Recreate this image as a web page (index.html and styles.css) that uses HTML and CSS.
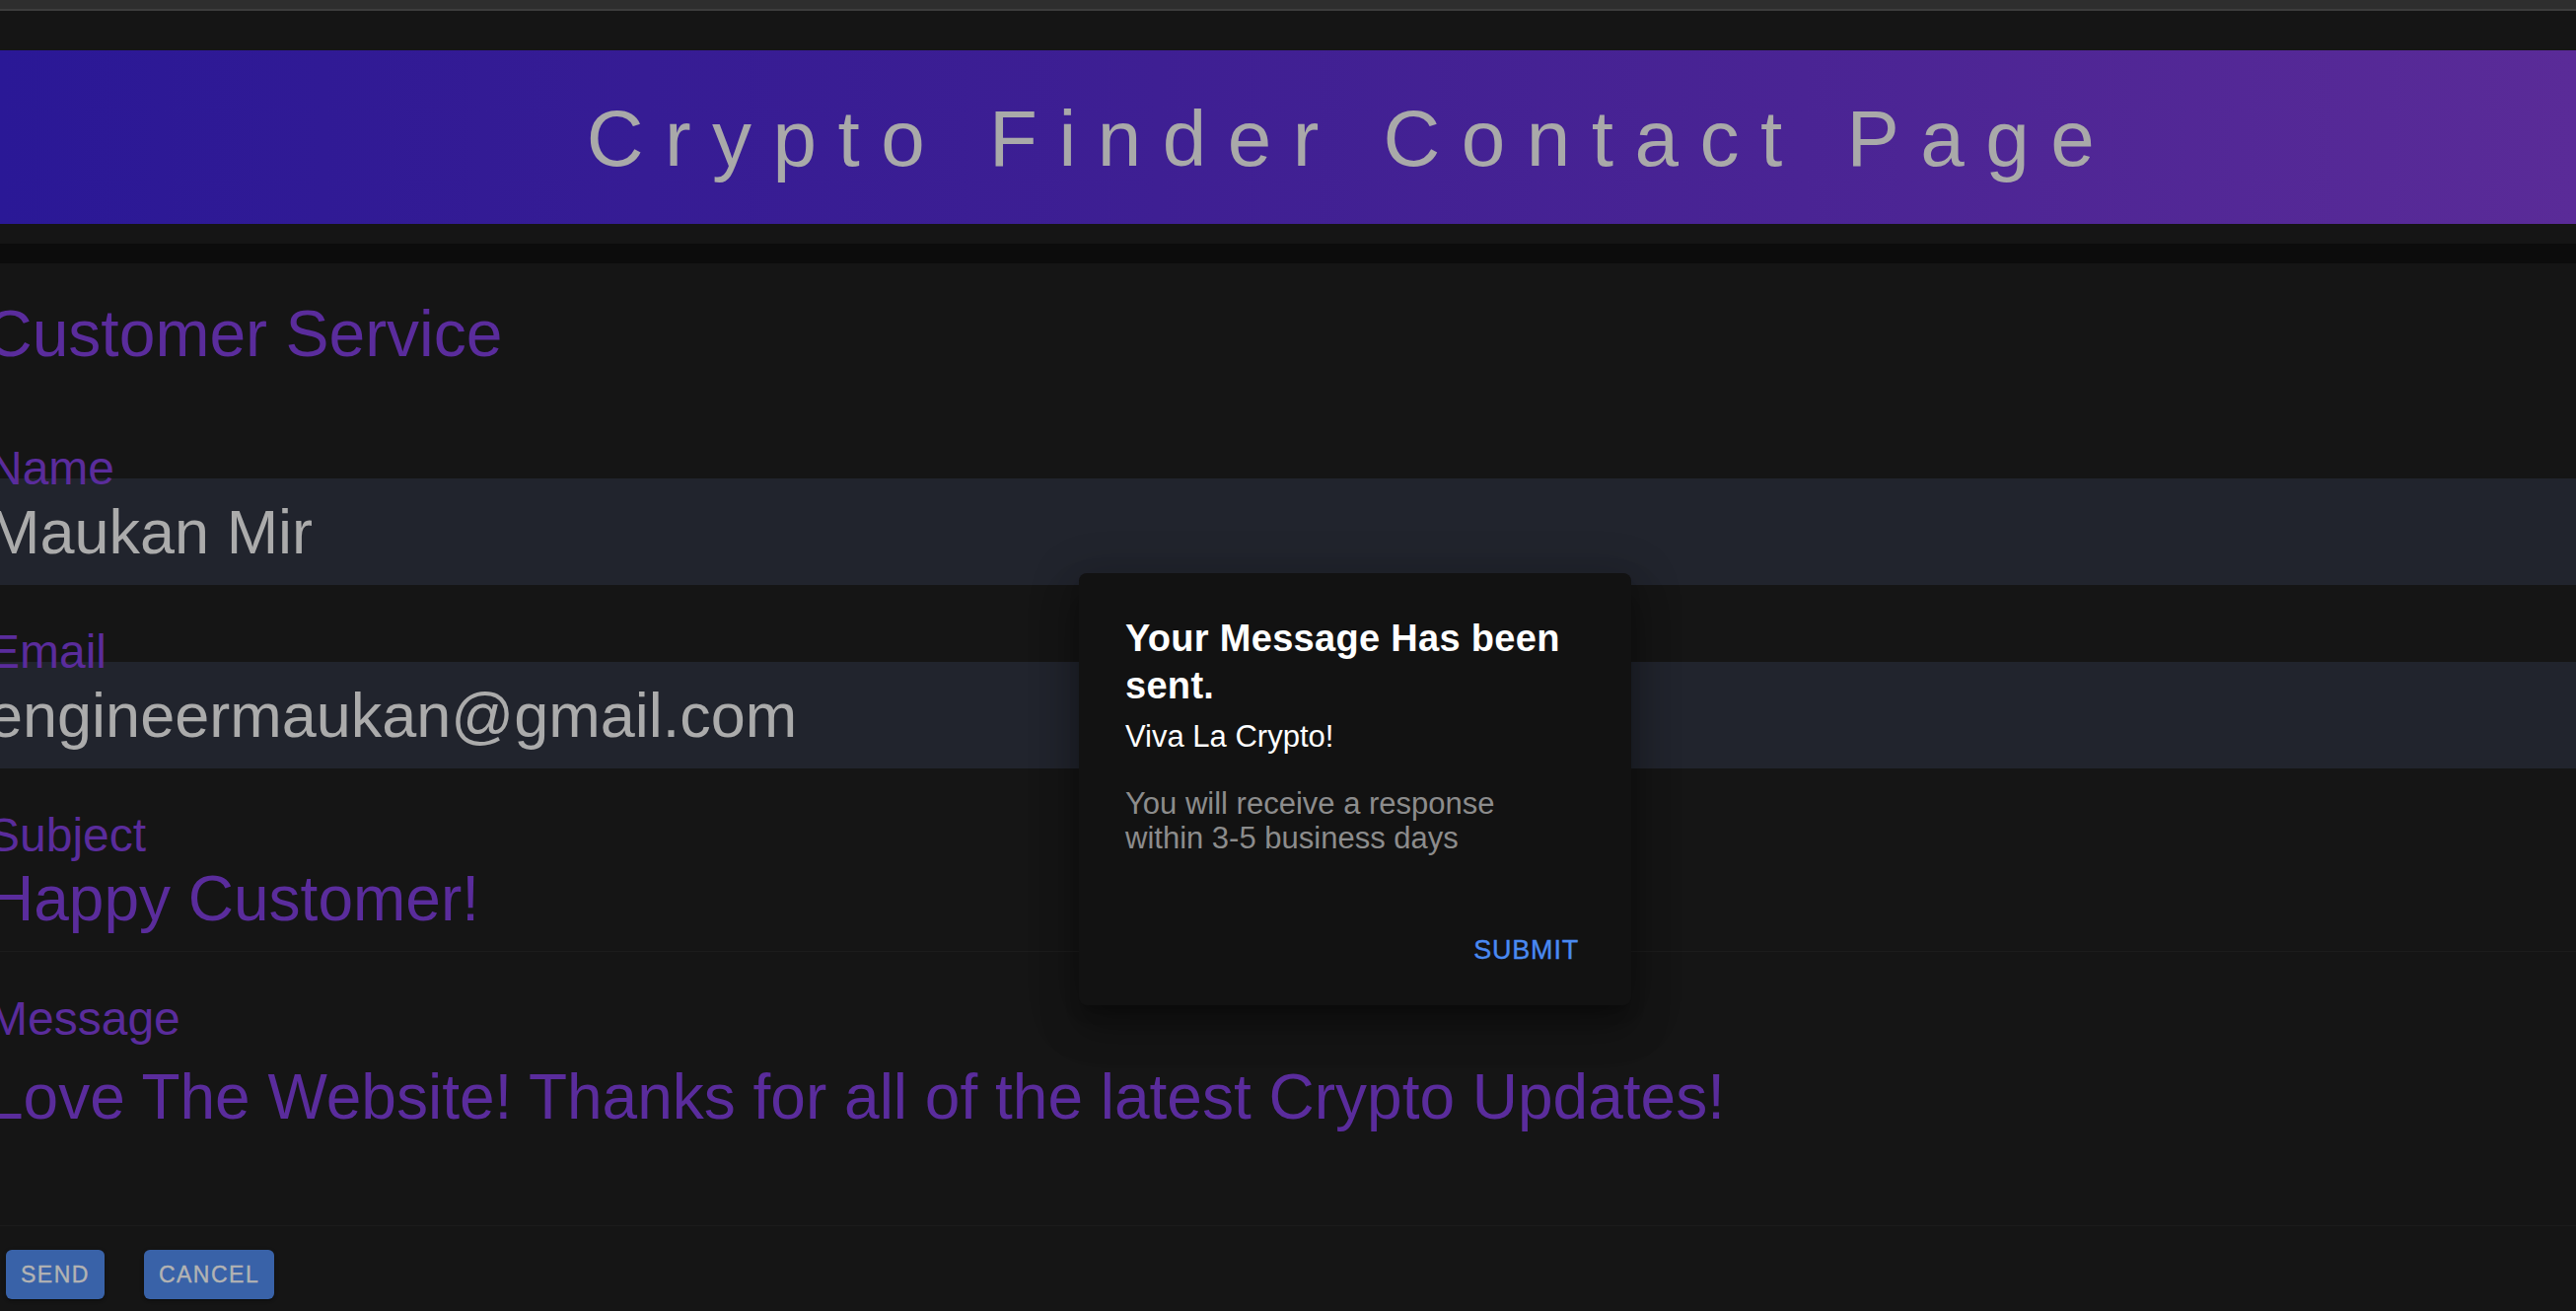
FILE: index.html
```html
<!DOCTYPE html>
<html lang="en">
<head>
<meta charset="utf-8">
<title>Crypto Finder Contact Page</title>
<link rel="stylesheet" href="styles.css">
</head>
<body>
<div class="topbar"></div>
<div class="page">
  <header class="hero">
    <h1 class="hero-title">Crypto Finder Contact Page</h1>
  </header>
  <div class="divider"></div>
  <main class="contact">
    <h2 class="contact-title">Customer Service</h2>
    <form class="form">
      <div class="field filled">
        <label class="field-label">Name</label>
        <div class="field-value">Maukan Mir</div>
      </div>
      <div class="field filled">
        <label class="field-label">Email</label>
        <div class="field-value">engineermaukan@gmail.com</div>
      </div>
      <div class="field plain">
        <label class="field-label">Subject</label>
        <div class="field-value">Happy Customer!</div>
      </div>
      <div class="field plain message">
        <label class="field-label">Message</label>
        <div class="field-value">Love The Website! Thanks for all of the latest Crypto Updates!</div>
      </div>
      <div class="actions">
        <button type="button" class="btn">Send</button>
        <button type="button" class="btn">Cancel</button>
      </div>
    </form>
  </main>
</div>
<div class="dialog" role="dialog">
  <h3 class="dialog-title">Your Message Has been sent.</h3>
  <p class="dialog-sub">Viva La Crypto!</p>
  <p class="dialog-text">You will receive a response within 3-5 business days</p>
  <div class="dialog-actions">
    <button type="button" class="text-btn">Submit</button>
  </div>
</div>
</body>
</html>
```

FILE: styles.css
```css
* { box-sizing: border-box; }

html, body {
  margin: 0;
  padding: 0;
  height: 100%;
}

body {
  background: #151515;
  font-family: "Liberation Sans", Arial, Helvetica, sans-serif;
  overflow: hidden;
  position: relative;
}

.topbar {
  height: 11px;
  background: #2e2e2e;
  border-bottom: 2px solid #3d3d3d;
}

.page {
  background: #151515;
  padding-top: 40px;
}

.hero {
  height: 176px;
  background: linear-gradient(90deg, #2a1896 0%, #361c94 25%, #3e1f93 45%, #4a2494 70%, #5a2b98 100%);
  padding-top: 50px;
  padding-left: 128px;
  text-align: center;
}

.hero-title {
  margin: 0;
  font-size: 80px;
  line-height: 80px;
  font-weight: 400;
  letter-spacing: 21.5px;
  color: #a9a9a9;
  white-space: nowrap;
}

.divider {
  height: 20px;
  margin-top: 20px;
  background: #0c0c0c;
}

.contact {
  padding-top: 38px;
}

.contact-title {
  margin: 0 0 0 -15px;
  font-size: 66px;
  line-height: 66px;
  font-weight: 400;
  color: #5a2c9c;
  white-space: nowrap;
}

.form {
  margin: 80px 0 0 -12px;
}

.field {
  display: block;
  margin-bottom: 44px;
}

.field-label {
  display: block;
  font-size: 48px;
  line-height: 48px;
  color: #5a2c9c;
  margin-bottom: -14px;
  white-space: nowrap;
}

.field-value {
  font-size: 64px;
  line-height: 64px;
  padding: 22px 0;
  white-space: nowrap;
}

.filled .field-value {
  background: #21242d;
  color: #ababab;
}

.filled .field-value {
  font-size: 63px;
}

.plain .field-value {
  color: #5a2c9c;
  padding-bottom: 21px;
  border-bottom: 1px solid #1c1c1c;
}

.message {
  margin-bottom: 24px;
}

.message .field-value {
  padding-top: 37px;
  padding-bottom: 98px;
}

.actions {
  display: flex;
  gap: 40px;
  margin-left: 18px;
}

.btn {
  height: 50px;
  padding: 0 15px;
  border: none;
  border-radius: 6px;
  background: #3962a8;
  color: #b3b3b3;
  font-family: "Liberation Sans", Arial, sans-serif;
  font-size: 23px;
  line-height: 50px;
  letter-spacing: 1.5px;
  text-transform: uppercase;
  -webkit-text-stroke: 0.4px #b3b3b3;
  box-shadow: 0 3px 1px -2px rgba(0,0,0,0.2), 0 2px 2px 0 rgba(0,0,0,0.14), 0 1px 5px 0 rgba(0,0,0,0.12);
}

.dialog {
  position: absolute;
  left: 1094px;
  top: 581px;
  width: 560px;
  height: 438px;
  padding: 42px 47px 0 47px;
  background: #121212;
  border-radius: 8px;
  box-shadow: 0 11px 15px -7px rgba(0,0,0,0.3), 0 24px 38px 3px rgba(0,0,0,0.2), 0 9px 46px 8px rgba(0,0,0,0.18);
  display: flex;
  flex-direction: column;
}

.dialog-title {
  margin: 0;
  font-size: 38px;
  line-height: 48px;
  font-weight: 700;
  letter-spacing: 0.3px;
  color: #ffffff;
}

.dialog-sub {
  margin: 9px 0 0;
  font-size: 31px;
  line-height: 37px;
  color: #ffffff;
}

.dialog-text {
  margin: 32px 0 0;
  max-width: 420px;
  font-size: 31px;
  line-height: 35px;
  color: #8c8c8c;
}

.dialog-actions {
  display: flex;
  justify-content: flex-end;
  margin-top: 73px;
  margin-right: 6px;
}

.text-btn {
  border: none;
  background: none;
  padding: 0;
  font-family: "Liberation Sans", Arial, sans-serif;
  font-size: 27px;
  line-height: 47px;
  letter-spacing: 0.8px;
  text-transform: uppercase;
  color: #4a8af2;
  -webkit-text-stroke: 0.4px #4a8af2;
}
```
